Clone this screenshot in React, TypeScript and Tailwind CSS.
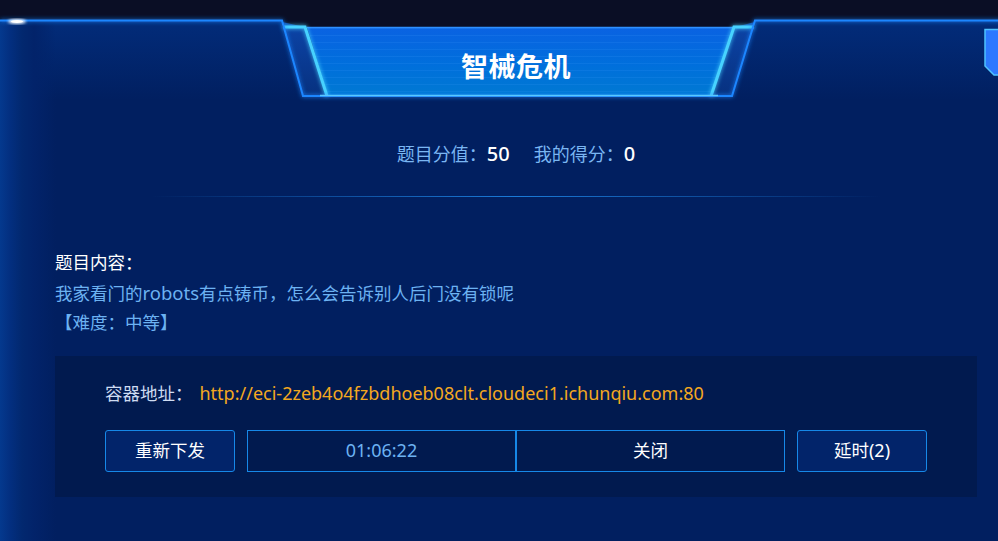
import React from 'react'

function HeaderFrame() {
  return (
    <svg
      className="absolute left-0 top-0 pointer-events-none"
      width="1032"
      height="104"
      viewBox="0 0 1032 104"
    >
      <defs>
        <linearGradient id="tabFill" x1="0" y1="0" x2="0" y2="1">
          <stop offset="0" stopColor="#0a62e2" />
          <stop offset="0.55" stopColor="#006fdc" />
          <stop offset="1" stopColor="#0079d2" />
        </linearGradient>
        <linearGradient id="sideFill" x1="0" y1="0" x2="0" y2="1">
          <stop offset="0" stopColor="#0c44a8" />
          <stop offset="1" stopColor="#07317f" />
        </linearGradient>
        <pattern id="stripes" width="8" height="7" patternUnits="userSpaceOnUse">
          <rect y="0" width="8" height="1" fill="#4aa6ff" opacity="0.14" />
        </pattern>
        <filter id="glow" x="-20%" y="-50%" width="140%" height="200%">
          <feGaussianBlur stdDeviation="2" result="b" />
          <feMerge>
            <feMergeNode in="b" />
            <feMergeNode in="SourceGraphic" />
          </feMerge>
        </filter>
        <filter id="soft">
          <feGaussianBlur stdDeviation="1.6" />
        </filter>
      </defs>

      {/* notch above the tab */}
      <rect x="282" y="18" width="473" height="9" fill="#0a0e25" />

      {/* main tab */}
      <polygon points="307,27 733,27 711,96 328,96" fill="url(#tabFill)" />
      <polygon points="307,27 733,27 711,96 328,96" fill="url(#stripes)" />
      <line x1="307" y1="27.5" x2="733" y2="27.5" stroke="#2f8fff" strokeWidth="1.5" />

      {/* side pieces */}
      <polygon points="282,22 305,27 327,96 303,96" fill="url(#sideFill)" />
      <polygon points="755,22 735,27 711,96 732,96" fill="url(#sideFill)" />
      <polyline
        points="283,27 305,27 327,96"
        fill="none"
        stroke="#47d2ff"
        strokeWidth="3"
        filter="url(#glow)"
      />
      <polyline
        points="754,27 734,27 711,96"
        fill="none"
        stroke="#47d2ff"
        strokeWidth="3"
        filter="url(#glow)"
      />

      {/* outer panel edge */}
      <polyline
        points="0,20.5 282,20.5 303,96 732,96 755,20.5 1032,20.5"
        fill="none"
        stroke="#1c86ff"
        strokeWidth="2"
        filter="url(#glow)"
      />
      <line x1="320" y1="95.5" x2="718" y2="95.5" stroke="#58c8ff" strokeWidth="1.5" />

      {/* glare top left */}
      <ellipse cx="17" cy="21.5" rx="9" ry="2.4" fill="#ffffff" filter="url(#soft)" />
      <ellipse cx="17" cy="21.5" rx="6" ry="1.4" fill="#ffffff" />

      {/* corner badge top right */}
      <polygon
        points="985,29.5 1010,29.5 1010,75 994,75 985,66"
        fill="#2c78ff"
        stroke="#4ec2ff"
        strokeWidth="1.5"
      />
    </svg>
  )
}

export default function App() {
  return (
    <div className="w-[998px] h-[541px] overflow-hidden bg-[#0a0e25] font-['Noto_Sans','Noto_Sans_CJK_SC',sans-serif]">
      <div className="relative w-[1032px] h-[541px] flex flex-col">
        <div className="h-[20px] shrink-0" />
        <div className="flex-1 flex flex-col pl-[55px] pr-[55px] bg-[linear-gradient(90deg,#04398e_0px,#032f80_10px,#02286f_22px,#02236a_34px,rgba(1,31,96,0)_56px),linear-gradient(180deg,#022c7a_0px,#011f60_80px)] bg-[#011f60]">
          <div className="relative z-10 h-[76px] pt-[33px] flex justify-center">
            <h1 className="text-[27px] leading-none font-bold text-white tracking-[0.5px]">
              智械危机
            </h1>
          </div>

          <div className="relative z-10 mt-[45px] flex justify-center items-center text-[18px] leading-[26px]">
            <span className="text-[#7ab6f2]">题目分值：</span>
            <span className="text-white text-[20px] font-medium">50</span>
            <span className="ml-[24px] text-[#7ab6f2]">我的得分：</span>
            <span className="text-white text-[20px] font-medium">0</span>
          </div>

          <div className="mt-[29px] self-center w-[730px] h-px bg-[linear-gradient(90deg,rgba(26,122,216,0)_0%,#1a7ad8_50%,rgba(26,122,216,0)_100%)]" />

          <div className="mt-[51px] text-[17.5px] leading-[29.5px]">
            <div className="text-white">题目内容：</div>
            <div className="text-[#6cb2f2]">我家看门的<span className="text-[18.5px]">robots</span>有点铸币，怎么会告诉别人后门没有锁呢</div>
            <div className="text-[#6cb2f2]">【难度：中等】</div>
          </div>

          <div className="mt-[18px] w-[922px] h-[141px] bg-[#011a4f] pl-[50px] pt-[24px]">
            <div className="flex items-center text-[17.5px] leading-[26px]">
              <span className="text-[#cfdcf2]">容器地址：</span>
              <span className="ml-[7px] text-[18px] text-[#f3a81f]">
                http://eci-2zeb4o4fzbdhoeb08clt.cloudeci1.ichunqiu.com:80
              </span>
            </div>
            <div className="mt-[24px] flex items-center gap-[12px] text-[17.5px]">
              <button className="w-[130px] h-[42px] rounded-[3px] border border-[#1688e8] bg-[#02246a] text-white">
                重新下发
              </button>
              <div className="flex">
                <div className="w-[269px] h-[42px] border border-[#1688e8] flex items-center justify-center text-[18px] text-[#6cb2f2]">
                  01:06:22
                </div>
                <button className="w-[269px] h-[42px] border border-[#1688e8] text-white">
                  关闭
                </button>
              </div>
              <button className="w-[130px] h-[42px] rounded-[3px] border border-[#1688e8] bg-[#02246a] text-white">
                延时<span className="text-[18px]">(2)</span>
              </button>
            </div>
          </div>
        </div>
        <HeaderFrame />
      </div>
    </div>
  )
}
